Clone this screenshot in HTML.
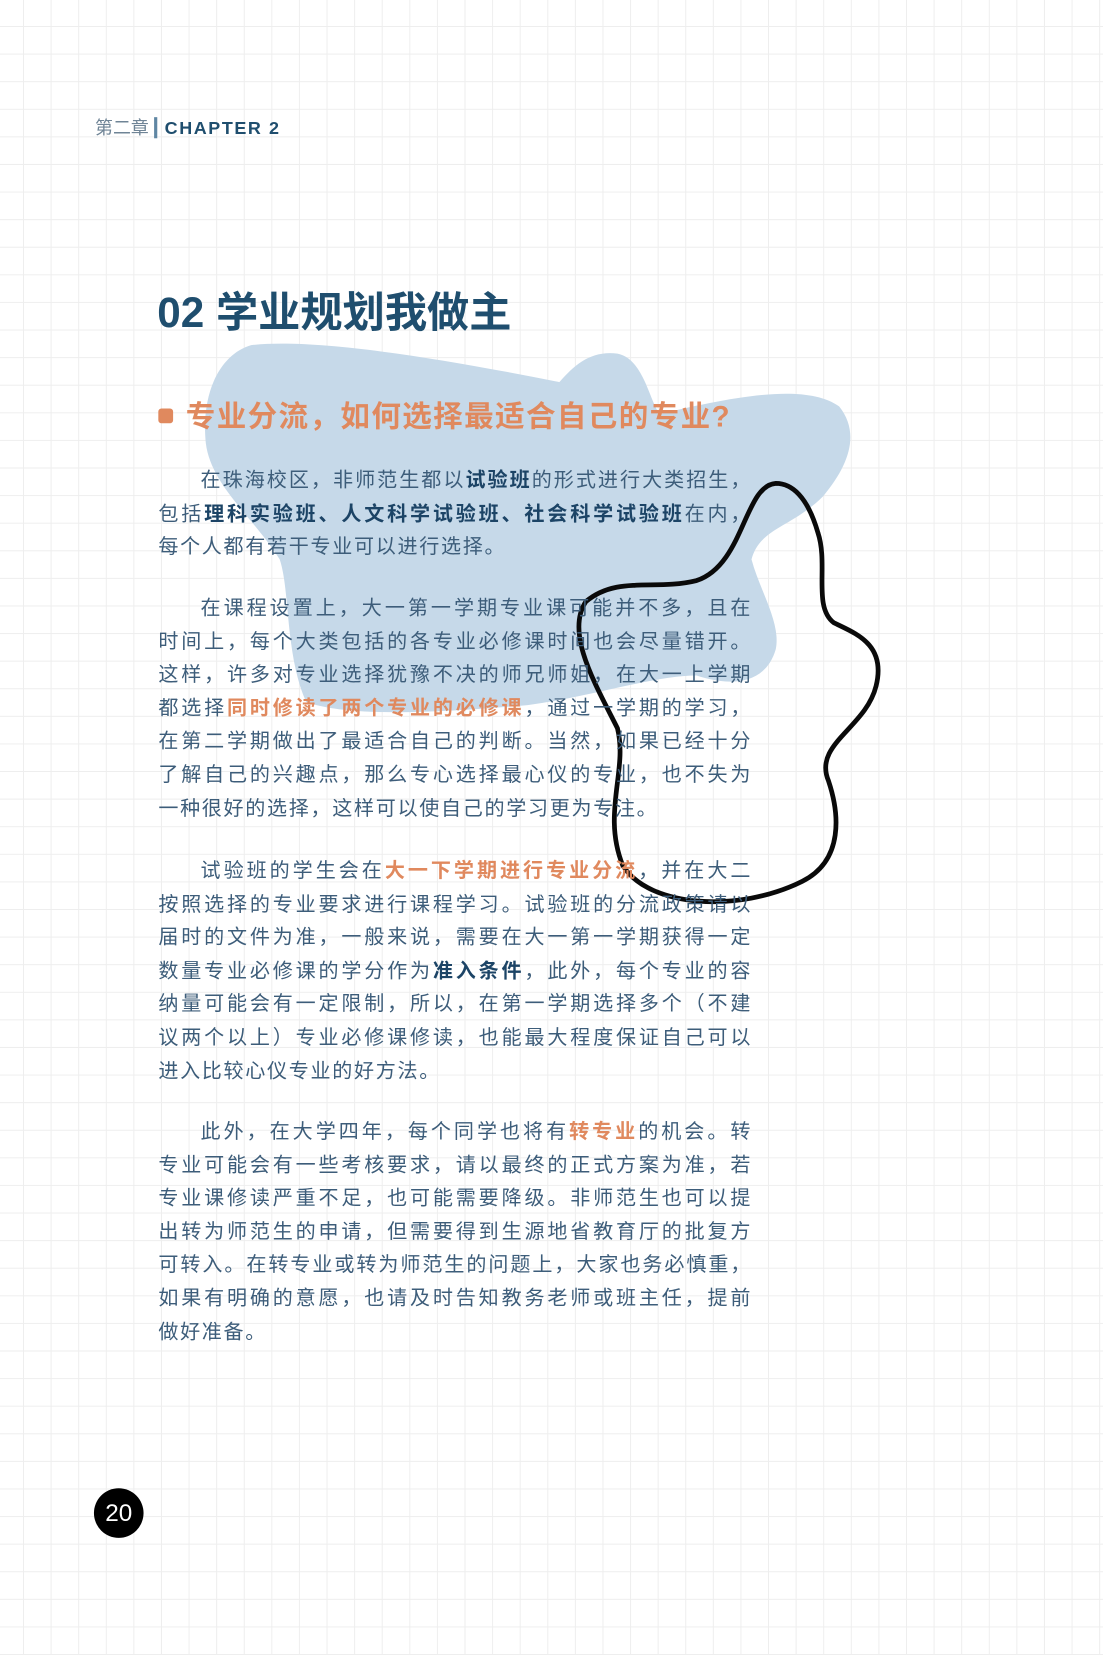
<!DOCTYPE html>
<html><head><meta charset="utf-8"><style>
html,body{margin:0;padding:0}
body{width:1103px;height:1655px;overflow:hidden;position:relative;background:#fff;
background-image:linear-gradient(to right,#eeeeee 1px,transparent 1px),linear-gradient(to bottom,#eeeeee 1px,transparent 1px);
background-size:27.6px 27.6px;background-position:23px 26px;font-family:"Liberation Sans","Noto Sans CJK SC",sans-serif}
#w{position:absolute;left:0;top:0;width:1045px;height:1568px;transform:scale(1.0555);transform-origin:0 0}
.a{position:absolute}
.ch{left:90px;top:110px;font-size:17px;color:#6f8496;white-space:nowrap;line-height:24px}
.ch b{color:#1f4e6e;letter-spacing:1.5px;font-weight:bold}
.ch i{display:inline-block;width:3px;height:20px;background:#5f86a3;vertical-align:-4px;margin:0 7px 0 5px}
.t{left:149px;top:272px;font-size:40px;font-weight:bold;color:#1f4e6e;line-height:50px;white-space:nowrap}
.s{left:176px;top:375px;font-size:28px;font-weight:bold;color:#e0895e;line-height:40px;white-space:nowrap;letter-spacing:1.3px}
.sq{left:150px;top:387px;width:14px;height:14px;border-radius:3px;background:#e0895e}
.p{left:150px;width:561px;font-size:19px;color:#3d5d7a;line-height:31.6px}
.p div{text-align:justify;text-align-last:justify;height:31.6px;white-space:nowrap}
.p div.l{text-align-last:left;letter-spacing:1.6px}
.p .in{padding-left:40px}
.bd{color:#1c4466;font-weight:bold}
.or{color:#e0895e;font-weight:bold}
.pg{left:89px;top:1410px;width:47px;height:47px;border-radius:50%;background:#000;color:#fff;font-size:23px;text-align:center;line-height:47px}
</style></head><body><div id="w">
<svg class="a" style="left:0;top:0" width="1045" height="1568">
<path d="M238 327 C300 320 420 340 530 362 C545 345 560 332 585 335 C610 340 615 380 625 392 C680 380 760 360 795 385 C815 410 805 440 780 470 C750 500 720 500 712 530 C720 560 740 590 735 615 C725 650 690 650 660 640 C620 640 560 660 500 668 C420 675 330 680 290 665 C270 620 275 560 265 530 C240 490 200 460 195 420 C190 370 210 335 238 327 Z" fill="#c6d9e9"/>
<path d="M735 458 C705 460 705 535 660 550 C620 560 585 545 555 570 C535 600 565 650 585 690 C595 730 570 770 590 820 C615 860 700 865 760 835 C800 815 795 770 785 740 C770 705 820 690 830 650 C840 610 810 600 790 590 C770 575 785 535 775 505 C765 470 750 458 735 458 Z" fill="none" stroke="#0a0a0a" stroke-width="4.5"/>
</svg>
<div class="a ch">第二章<i></i><b>CHAPTER 2</b></div>
<div class="a t">02 学业规划我做主</div>
<div class="a sq"></div>
<div class="a s">专业分流，如何选择最适合自己的专业?</div>
<div class="a p" style="top:440px">
<div class="in">在珠海校区，非师范生都以<span class="bd">试验班</span>的形式进行大类招生，</div>
<div>包括<span class="bd">理科实验班、人文科学试验班、社会科学试验班</span>在内，</div>
<div class="l">每个人都有若干专业可以进行选择。</div>
</div>
<div class="a p" style="top:561px">
<div class="in">在课程设置上，大一第一学期专业课可能并不多，且在</div>
<div>时间上，每个大类包括的各专业必修课时间也会尽量错开。</div>
<div>这样，许多对专业选择犹豫不决的师兄师姐，在大一上学期</div>
<div>都选择<span class="or">同时修读了两个专业的必修课</span>，通过一学期的学习，</div>
<div>在第二学期做出了最适合自己的判断。当然，如果已经十分</div>
<div>了解自己的兴趣点，那么专心选择最心仪的专业，也不失为</div>
<div class="l">一种很好的选择，这样可以使自己的学习更为专注。</div>
</div>
<div class="a p" style="top:810px">
<div class="in">试验班的学生会在<span class="or">大一下学期进行专业分流</span>，并在大二</div>
<div>按照选择的专业要求进行课程学习。试验班的分流政策请以</div>
<div>届时的文件为准，一般来说，需要在大一第一学期获得一定</div>
<div>数量专业必修课的学分作为<span class="bd">准入条件</span>，此外，每个专业的容</div>
<div>纳量可能会有一定限制，所以，在第一学期选择多个（不建</div>
<div>议两个以上）专业必修课修读，也能最大程度保证自己可以</div>
<div class="l">进入比较心仪专业的好方法。</div>
</div>
<div class="a p" style="top:1057px">
<div class="in">此外，在大学四年，每个同学也将有<span class="or">转专业</span>的机会。转</div>
<div>专业可能会有一些考核要求，请以最终的正式方案为准，若</div>
<div>专业课修读严重不足，也可能需要降级。非师范生也可以提</div>
<div>出转为师范生的申请，但需要得到生源地省教育厅的批复方</div>
<div>可转入。在转专业或转为师范生的问题上，大家也务必慎重，</div>
<div>如果有明确的意愿，也请及时告知教务老师或班主任，提前</div>
<div class="l">做好准备。</div>
</div>
<div class="a pg">20</div>
</div></body></html>
